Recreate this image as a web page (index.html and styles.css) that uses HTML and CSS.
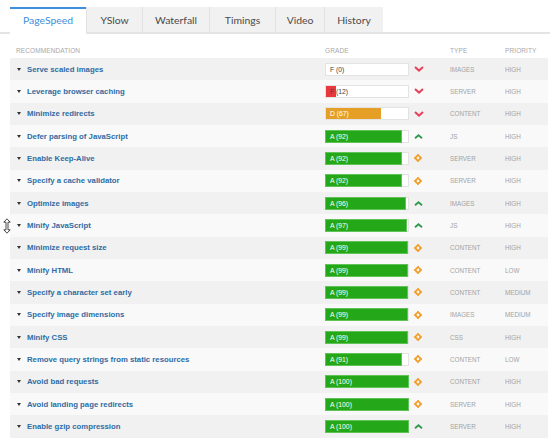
FILE: index.html
```html
<!DOCTYPE html>
<html lang="en">
<head>
    <meta charset="UTF-8" />
    <title>PageSpeed</title>
    <link rel="stylesheet" href="styles.css">
</head>
<body>

<div class="tabs">
    <div class="tab active" style="width:76px">PageSpeed</div>
    <div class="tab" style="width:56px">YSlow</div>
    <div class="tab" style="width:67px">Waterfall</div>
    <div class="tab" style="width:66px">Timings</div>
    <div class="tab" style="width:49px">Video</div>
    <div class="tab" style="width:59px">History</div>
</div>

<div class="report">
    <div class="head">
        <div class="head-rec">Recommendation</div>
        <div>Grade</div>
        <div></div>
        <div>Type</div>
        <div>Priority</div>
    </div>
    <div id="rows"></div>

    <!-- mouse cursor in the screenshot -->
    <svg class="cursor" width="8" height="16" viewBox="0 0 8 16">
        <path d="M4 0.8 L7.2 4.2 L5 4.2 L5 11.8 L7.2 11.8 L4 15.2 L0.8 11.8 L3 11.8 L3 4.2 L0.8 4.2 Z" fill="#fff" stroke="#333" stroke-width="0.9"/>
    </svg>
</div>

<script>
    const rowsEl = document.getElementById('rows');

    const recs = [
        ['Serve scaled images', 'F', 0, 'down', 'IMAGES', 'HIGH'],
        ['Leverage browser caching', 'F', 12, 'down', 'SERVER', 'HIGH'],
        ['Minimize redirects', 'D', 67, 'down', 'CONTENT', 'HIGH'],
        ['Defer parsing of JavaScript', 'A', 92, 'up', 'JS', 'HIGH'],
        ['Enable Keep-Alive', 'A', 92, 'mid', 'SERVER', 'HIGH'],
        ['Specify a cache validator', 'A', 92, 'mid', 'SERVER', 'HIGH'],
        ['Optimize images', 'A', 96, 'up', 'IMAGES', 'HIGH'],
        ['Minify JavaScript', 'A', 97, 'up', 'JS', 'HIGH'],
        ['Minimize request size', 'A', 99, 'mid', 'CONTENT', 'HIGH'],
        ['Minify HTML', 'A', 99, 'mid', 'CONTENT', 'LOW'],
        ['Specify a character set early', 'A', 99, 'mid', 'CONTENT', 'MEDIUM'],
        ['Specify image dimensions', 'A', 99, 'mid', 'IMAGES', 'MEDIUM'],
        ['Minify CSS', 'A', 99, 'mid', 'CSS', 'HIGH'],
        ['Remove query strings from static resources', 'A', 91, 'mid', 'CONTENT', 'LOW'],
        ['Avoid bad requests', 'A', 100, 'mid', 'CONTENT', 'HIGH'],
        ['Avoid landing page redirects', 'A', 100, 'mid', 'SERVER', 'HIGH'],
        ['Enable gzip compression', 'A', 100, 'up', 'SERVER', 'HIGH']
    ];

    const icons = {
        down: '<svg width="10" height="6" viewBox="0 0 10 6"><path d="M1 1 L5 4.6 L9 1" fill="none" stroke="#e5435a" stroke-width="2"/></svg>',
        up: '<svg width="9" height="5" viewBox="0 0 9 5"><path d="M1 4.2 L4.5 1.2 L8 4.2" fill="none" stroke="#2f9a4c" stroke-width="1.8"/></svg>',
        mid: '<svg width="8" height="8" viewBox="0 0 8 8"><circle cx="4" cy="4" r="2.2" fill="none" stroke="#f39a1e" stroke-width="1.6"/><rect x="3.2" y="0" width="1.6" height="1.4" fill="#f39a1e"/><rect x="3.2" y="6.6" width="1.6" height="1.4" fill="#f39a1e"/><rect x="0" y="3.2" width="1.4" height="1.6" fill="#f39a1e"/><rect x="6.6" y="3.2" width="1.4" height="1.6" fill="#f39a1e"/></svg>'
    };

    recs.forEach(([name, grade, score, trend, type, priority]) => {
        const row = document.createElement('div');
        row.classList.add('row');
        const fillClass = 'fill-' + grade.toLowerCase();
        const textClass = score < 40 ? 'bar-text dark' : 'bar-text';
        row.innerHTML = `
            <div class="rec"><span class="caret"></span>${name}</div>
            <div class="bar">
                <div class="fill ${fillClass}" style="width:${score}%"></div>
                <span class="${textClass}">${grade} (${score})</span>
            </div>
            <div class="trend">${icons[trend]}</div>
            <div class="meta">${type}</div>
            <div class="meta">${priority}</div>
        `;
        rowsEl.appendChild(row);
    });
</script>

</body>
</html>
```

FILE: styles.css
```css
body {
    margin: 0;
    background: #fff;
    font-family: "Liberation Sans", Arial, sans-serif;
}
.tabs {
    display: flex;
    padding: 7px 0 0 10px;
    border-bottom: 2px solid #e4e4e4;
    height: 25px;
}
.tab {
    box-sizing: border-box;
    height: 25px;
    background: #f1f1f1;
    border-left: 1px solid #e2e2e2;
    font-family: Lato, "Open Sans", sans-serif;
    font-size: 10.4px;
    color: #4a4a4a;
    text-align: center;
    line-height: 26px;
}
.tab.active {
    background: #fff;
    border-left: none;
    border-top: 2px solid #3d8fdc;
    color: #3d8fdc;
    height: 27px;
    line-height: 23px;
}
.report {
    position: relative;
    margin: 0 2px 0 10px;
}
.head,
.row {
    display: grid;
    grid-template-columns: 315px 84px 41px 55px 1fr;
    align-items: center;
}
.head {
    height: 24px;
    align-items: end;
    box-sizing: border-box;
    padding-bottom: 4px;
    font-size: 6.5px;
    color: #a8a8a8;
    text-transform: uppercase;
    letter-spacing: 0.1px;
}
.head-rec {
    padding-left: 6px;
}
.row {
    height: 22.33px;
    background: #f1f1f1;
}
.row:nth-child(even) {
    background: #f9f9f9;
}
.rec {
    display: flex;
    align-items: center;
    font-size: 7.75px;
    font-weight: bold;
    color: #2f6ca3;
}
.caret {
    width: 0;
    height: 0;
    margin: 0 6px 0 7px;
    border-left: 2.2px solid transparent;
    border-right: 2.2px solid transparent;
    border-top: 3px solid #333;
}
.bar {
    position: relative;
    box-sizing: border-box;
    height: 13px;
    background: #fff;
    border: 1px solid #e3e3e3;
}
.fill {
    height: 100%;
}
.fill-a {
    background: #25a71a;
    outline: 1px solid #5fc455;
}
.fill-d {
    background: #e59f26;
}
.fill-f {
    background: #e9373b;
}
.bar-text {
    position: absolute;
    left: 4px;
    top: 0;
    line-height: 11px;
    font-size: 6.8px;
    color: #fff;
}
.bar-text.dark {
    color: #444;
}
.trend {
    display: flex;
    align-items: center;
    padding-left: 5px;
}
.trend svg {
    display: block;
}
.meta {
    font-size: 6.3px;
    color: #a3a3a3;
}
.cursor {
    position: absolute;
    left: -7px;
    top: 184px;
}
```
